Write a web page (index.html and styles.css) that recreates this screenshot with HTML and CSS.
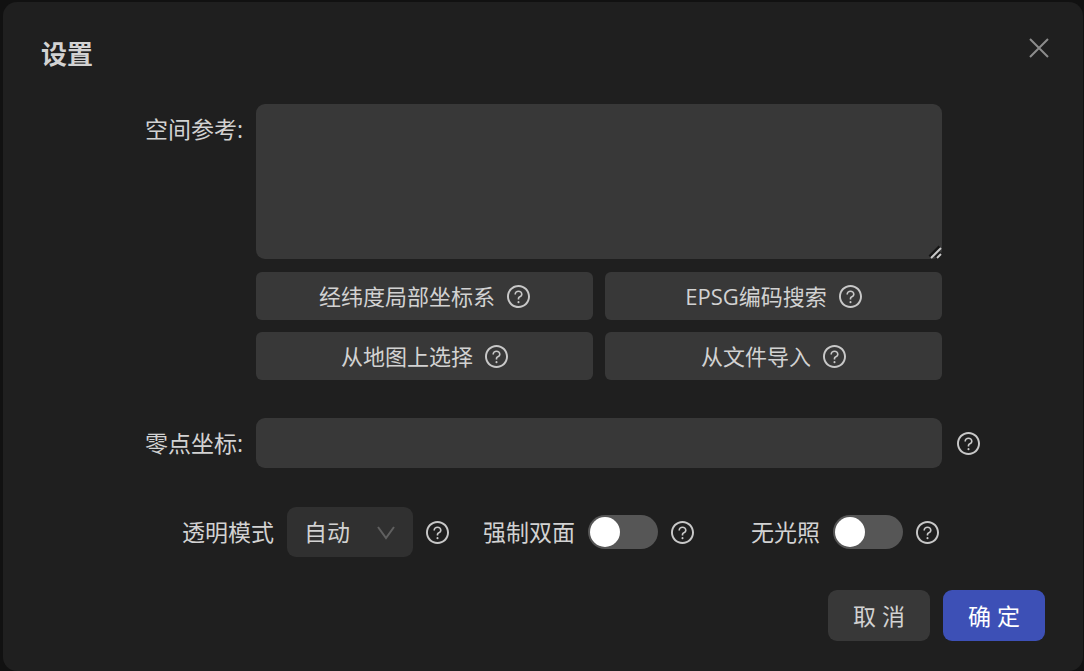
FILE: index.html
```html
<!DOCTYPE html>
<html lang="zh-CN">
<head>
    <meta charset="UTF-8">
    <meta name="viewport" content="width=device-width, initial-scale=1.0">
    <title>设置</title>
    <link rel="stylesheet" href="styles.css">
</head>
<body>
    <svg class="sprite" aria-hidden="true">
        <symbol id="help" viewBox="64 64 896 896">
            <path d="M512 64C264.6 64 64 264.6 64 512s200.6 448 448 448 448-200.6 448-448S759.4 64 512 64zm0 820c-205.4 0-372-166.6-372-372s166.6-372 372-372 372 166.6 372 372-166.6 372-372 372z"/>
            <path d="M623.6 316.7C593.6 290.4 554 276 512 276s-81.6 14.5-111.6 40.7C369.2 344 352 380.7 352 420v7.6c0 4.4 3.6 8 8 8h48c4.4 0 8-3.6 8-8V420c0-44.1 43.1-80 96-80s96 35.9 96 80c0 31.1-22 59.6-56.1 72.7-21.2 8.1-39.2 22.3-52.1 40.9-13.1 19-19.9 41.8-19.9 64.9V620c0 4.4 3.6 8 8 8h48c4.4 0 8-3.6 8-8v-22.7a48.3 48.3 0 0130.9-44.8c59-22.7 97.1-74.7 97.1-132.5.1-39.3-17.1-76-48.3-103.3zM472 732a40 40 0 1080 0 40 40 0 10-80 0z"/>
        </symbol>
    </svg>

    <form class="modal" role="dialog" aria-labelledby="title">
        <header class="modal-header">
            <h1 class="modal-title" id="title">设置</h1>
            <button class="close" type="button" aria-label="关闭">
                <svg width="20" height="20" viewBox="0 0 20 20"><path d="M1 1L19 19M19 1L1 19"/></svg>
            </button>
        </header>

        <div class="row">
            <label class="label" for="srs">空间参考:</label>
            <div class="field">
                <textarea class="box textarea" id="srs"></textarea>
                <div class="actions">
                    <button class="action" type="button">经纬度局部坐标系<svg class="help"><use href="#help"/></svg></button>
                    <button class="action" type="button">EPSG编码搜索<svg class="help"><use href="#help"/></svg></button>
                    <button class="action" type="button">从地图上选择<svg class="help"><use href="#help"/></svg></button>
                    <button class="action" type="button">从文件导入<svg class="help"><use href="#help"/></svg></button>
                </div>
            </div>
        </div>

        <div class="row row-origin">
            <label class="label" for="origin">零点坐标:</label>
            <input class="box input" id="origin" type="text">
            <svg class="help"><use href="#help"/></svg>
        </div>

        <div class="options">
            <div class="option">
                <label for="alpha">透明模式</label>
                <div class="select">
                    <select id="alpha">
                        <option>自动</option>
                    </select>
                    <svg class="arrow" width="18" height="14" viewBox="0 0 18 14"><path d="M1 1L9 12L17 1"/></svg>
                </div>
                <svg class="help"><use href="#help"/></svg>
            </div>
            <div class="option">
                <label for="double">强制双面</label>
                <input class="switch" id="double" type="checkbox" role="switch">
                <svg class="help"><use href="#help"/></svg>
            </div>
            <div class="option">
                <label for="unlit">无光照</label>
                <input class="switch" id="unlit" type="checkbox" role="switch">
                <svg class="help"><use href="#help"/></svg>
            </div>
        </div>

        <footer class="modal-footer">
            <button class="btn" type="button">取 消</button>
            <button class="btn btn-primary" type="submit">确 定</button>
        </footer>
    </form>
</body>
</html>
```
FILE: styles.css
```css
* {
    box-sizing: border-box;
}
body {
    margin: 0;
    padding: 2px 1px 1px 3px;
    background-color: #111111;
    color: #d2d2d2;
    font-family: "Open Sans", "Noto Sans CJK SC", sans-serif;
    font-size: 23px;
    line-height: 32px;
    color-scheme: dark;
}
button, input, textarea, select {
    font: inherit;
    color: inherit;
    border: none;
    margin: 0;
}
button, select {
    cursor: pointer;
}
.sprite {
    display: none;
}
.modal {
    min-height: calc(100vh - 3px);
    padding: 36px 38px 30px;
    border-radius: 14px;
    background-color: #1f1f1f;
}
.modal-header {
    display: flex;
    justify-content: space-between;
    align-items: flex-start;
    margin-bottom: 34px;
}
.modal-title {
    margin: 0;
    font-size: 26px;
    font-weight: 700;
    line-height: 32px;
}
.close {
    display: flex;
    padding: 0;
    margin-right: -4px;
    background: none;
}
.close svg, .arrow {
    fill: none;
    stroke: #8c8c8c;
    stroke-width: 2;
}
.help {
    flex: none;
    width: 23px;
    height: 23px;
    fill: #c8c8c8;
}
.row {
    display: grid;
    grid-template-columns: 202px 1fr 90px;
    column-gap: 13px;
}
.label {
    padding-top: 9px;
    text-align: right;
}
.box {
    display: block;
    width: 100%;
    padding: 8px 16px;
    border-radius: 9px;
    background-color: #383838;
}
.textarea {
    height: 155px;
    resize: vertical;
}
.textarea::-webkit-resizer {
    background: url("data:image/svg+xml,%3Csvg xmlns='http://www.w3.org/2000/svg' width='14' height='14' fill='none'%3E%3Cpath d='M2 12L12 2M8 13L13 8' stroke='%23151515' stroke-width='4'/%3E%3Cpath d='M3 13L13 3M9 13L13 9' stroke='%23c8c8c8' stroke-width='2'/%3E%3C/svg%3E") no-repeat right bottom;
}
.actions {
    display: grid;
    grid-template-columns: 1fr 1fr;
    gap: 12px;
    margin-top: 13px;
}
.action {
    display: flex;
    justify-content: center;
    align-items: center;
    gap: 12px;
    height: 48px;
    padding: 0;
    border-radius: 6px;
    background-color: #383838;
    font-size: 22px;
}
.row-origin {
    align-items: center;
    margin-top: 38px;
}
.row-origin .label {
    padding: 0;
}
.row-origin .help {
    margin-left: 2px;
}
.input {
    height: 50px;
}
.options {
    display: grid;
    grid-template-columns: 1fr 245px 245px;
    justify-items: end;
    margin: 39px 106px 0 0;
}
.option {
    display: flex;
    align-items: center;
    gap: 13px;
    height: 50px;
}
.select {
    position: relative;
}
.select select {
    width: 126px;
    height: 50px;
    padding: 0 17px;
    border-radius: 9px;
    background-color: #303030;
    appearance: none;
}
.arrow {
    position: absolute;
    top: 19px;
    right: 18px;
    stroke: #606060;
    pointer-events: none;
}
.switch {
    width: 70px;
    height: 34px;
    padding: 2px;
    border-radius: 17px;
    background-color: #565656;
    appearance: none;
    cursor: pointer;
}
.switch::before {
    content: "";
    display: block;
    width: 30px;
    height: 30px;
    border-radius: 50%;
    background-color: #ffffff;
}
.switch:checked {
    background-color: #3d50b6;
}
.switch:checked::before {
    margin-left: auto;
}
.modal-footer {
    display: flex;
    justify-content: flex-end;
    gap: 13px;
    margin-top: 33px;
}
.btn {
    height: 51px;
    padding: 0 25px;
    border-radius: 9px;
    background-color: #383838;
}
.btn-primary {
    background-color: #3d50b6;
    color: #ffffff;
}
```
